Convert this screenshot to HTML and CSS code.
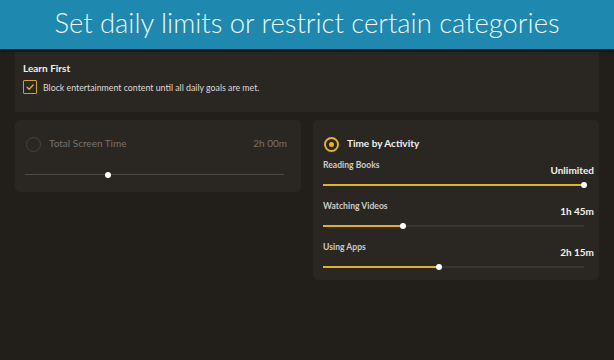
FILE: index.html
```html
<!DOCTYPE html>
<html>
<head>
<meta charset="utf-8">
<link rel="stylesheet" href="styles.css">
</head>
<body>
<header class="banner">Set daily limits or restrict certain categories</header>
<main class="content">
  <section class="learn">
    <div class="learn-title">Learn First</div>
    <label class="check-row">
      <span class="checkbox">
        <svg viewBox="0 0 14 14" width="14" height="14"><path d="M3.6 7.2 L6 9.6 L10.6 4.6" fill="none" stroke="#e2b520" stroke-width="1.5" stroke-linecap="round" stroke-linejoin="round"/></svg>
      </span>
      <span class="check-text">Block entertainment content until all daily goals are met.</span>
    </label>
  </section>
  <div class="cards">
    <section class="card card-total">
      <div class="card-head">
        <span class="radio"></span>
        <span class="card-title muted">Total Screen Time</span>
        <span class="card-value muted">2h 00m</span>
      </div>
      <div class="slider slider-grey">
        <div class="track"></div>
        <div class="thumb" style="left: 32%"></div>
      </div>
    </section>
    <section class="card card-activity">
      <div class="card-head">
        <span class="radio radio-on"><span class="dot"></span></span>
        <span class="card-title">Time by Activity</span>
      </div>
      <div class="activity">
        <div class="act-head"><span class="act-label">Reading Books</span><span class="act-value">Unlimited</span></div>
        <div class="slider"><div class="track"></div><div class="fill" style="width: 100%"></div><div class="thumb" style="left: 100%"></div></div>
      </div>
      <div class="activity">
        <div class="act-head"><span class="act-label">Watching Videos</span><span class="act-value">1h 45m</span></div>
        <div class="slider"><div class="track"></div><div class="fill" style="width: 30.7%"></div><div class="thumb" style="left: 30.7%"></div></div>
      </div>
      <div class="activity">
        <div class="act-head"><span class="act-label">Using Apps</span><span class="act-value">2h 15m</span></div>
        <div class="slider"><div class="track"></div><div class="fill" style="width: 44.5%"></div><div class="thumb" style="left: 44.5%"></div></div>
      </div>
    </section>
  </div>
</main>
</body>
</html>
```
FILE: styles.css
```css
* { box-sizing: border-box; }
html, body { margin: 0; padding: 0; }
body {
  width: 614px;
  height: 360px;
  overflow: hidden;
  background: #221f1b;
  font-family: Lato, "Open Sans", sans-serif;
  color: #f2f0ec;
}
.banner {
  height: 49px;
  background: #1e88ae;
  color: #eef8fb;
  font-size: 27.4px;
  font-weight: 300;
  line-height: 46px;
  text-align: center;
  box-shadow: 0 2px 2px rgba(0, 0, 0, 0.55);
  position: relative;
}
.content {
  padding: 3px 15px 0 15px;
}
.learn {
  background: #2a2723;
  height: 60px;
  padding: 10px 8px 0 8px;
}
.learn-title {
  font-size: 10px;
  font-weight: 700;
  line-height: 12px;
}
.check-row {
  display: flex;
  align-items: center;
  gap: 6px;
  margin-top: 6px;
}
.checkbox {
  width: 14px;
  height: 14px;
  border: 1.5px solid #c9a328;
  border-radius: 1px;
  display: flex;
  align-items: center;
  justify-content: center;
}
.checkbox svg { display: block; }
.check-text {
  font-size: 8.8px;
  color: #ddd9d3;
}
.cards {
  display: flex;
  align-items: flex-start;
  gap: 12px;
  margin-top: 8px;
}
.card {
  background: #2a2723;
  border-radius: 5px;
}
.card-total {
  width: 286px;
  height: 72px;
  padding: 16px 14px 0 11px;
}
.card-activity {
  width: 286px;
  height: 160px;
  padding: 16px 5px 0 10px;
}
.card-head {
  display: flex;
  align-items: center;
  height: 16px;
}
.radio {
  width: 15px;
  height: 15px;
  border-radius: 50%;
  border: 1.5px solid #47433e;
  display: flex;
  align-items: center;
  justify-content: center;
  flex: none;
}
.card-activity .card-head { padding-left: 1px; }
.radio-on { border: 2px solid #e3b51d; }
.dot {
  width: 5px;
  height: 5px;
  border-radius: 50%;
  background: #e3b51d;
}
.card-title {
  font-size: 10px;
  font-weight: 700;
  margin-left: 8px;
  line-height: 12px;
  margin-bottom: 3px;
}
.card-title.muted { font-weight: 400; }
.muted { color: #77726c; }
.card-value {
  margin-left: auto;
  font-size: 10px;
  line-height: 12px;
  margin-bottom: 3px;
}
.card-total .slider {
  margin-top: 14px;
  margin-left: -1px;
  margin-right: 3px;
}
.slider {
  position: relative;
  height: 18px;
}
.track {
  position: absolute;
  left: 0;
  right: 0;
  top: 8px;
  height: 2px;
  background: #3a3733;
}
.slider-grey .track {
  height: 1px;
  top: 8px;
  background: #4c4843;
}
.fill {
  position: absolute;
  left: 0;
  top: 8px;
  height: 2px;
  background: #e2b41c;
}
.thumb {
  position: absolute;
  top: 6px;
  width: 6px;
  height: 6px;
  margin-left: -3px;
  border-radius: 50%;
  background: #ffffff;
}
.activity {
  margin-top: 7px;
}
.activity + .activity { margin-top: 6px; }
.activity .slider { margin-right: 10px; }
.act-head {
  display: flex;
  justify-content: space-between;
  align-items: flex-start;
  height: 17px;
}
.act-label {
  font-size: 8.6px;
  font-weight: 700;
  color: #cfcbc5;
  line-height: 12px;
}
.act-value {
  font-size: 10px;
  font-weight: 700;
  color: #f4f2ee;
  line-height: 12px;
  margin-top: 5px;
}
```
